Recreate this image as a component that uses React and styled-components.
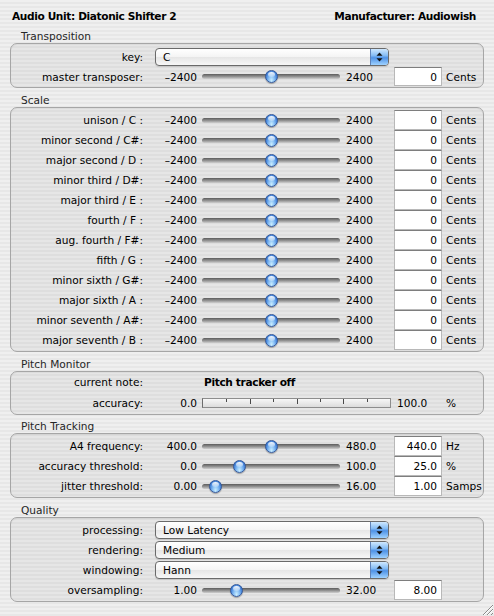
import React from "react";
import styled, { createGlobalStyle } from "styled-components";

const COLS = "132px 12px 42px 5px 138px 6px 43px 5px 48px 4px 1fr";

const Global = createGlobalStyle`
  html, body { margin: 0; padding: 0; background: #ececec; }
`;

const Window = styled.div`
  width: 494px;
  height: 616px;
  position: relative;
  overflow: hidden;
  box-sizing: border-box;
  background: repeating-linear-gradient(
    180deg,
    #efefef 0px,
    #efefef 2px,
    #e7e7e7 2px,
    #e7e7e7 4px
  );
  font-family: "Lucida Grande", "DejaVu Sans", sans-serif;
  font-size: 10.6px;
  color: #000;
`;

const Header = styled.div`
  height: 29px;
  box-sizing: border-box;
  padding: 3px 18px 0 12px;
  display: flex;
  align-items: center;
  justify-content: space-between;
  font-weight: bold;
  letter-spacing: -0.38px;
`;

const SectionTitle = styled.div`
  height: 14px;
  line-height: 14px;
  margin: ${(p) => p.$mt || 0}px 0 0 21px;
  color: #262626;
`;

const Panel = styled.div`
  margin: 0 10px;
  border: 1px solid #a6a6a6;
  border-radius: 7px;
  background: rgba(0, 0, 0, 0.035);
  box-shadow: inset 0 1px 1px rgba(0, 0, 0, 0.05);
  padding: ${(p) => p.$pt || 0}px 0 ${(p) => p.$pb || 0}px;
  display: flex;
  flex-direction: column;
`;

const Row = styled.div`
  display: grid;
  grid-template-columns: ${COLS};
  height: ${(p) => p.$h || 20}px;
  align-items: center;
  white-space: nowrap;
`;

const Label = styled.span`
  grid-column: 1 / 2;
  text-align: right;
`;

const MinVal = styled.span`
  grid-column: 2 / 4;
  text-align: right;
`;

const MaxVal = styled.span`
  grid-column: 7 / 9;
`;

const Unit = styled.span`
  grid-column: 11 / 12;
`;

const Field = styled.div`
  grid-column: 9 / 10;
  align-self: stretch;
  box-sizing: border-box;
  background: #fff;
  border: 1px solid #b8b8b8;
  border-top-color: #7e7e7e;
  text-align: right;
  padding-right: 4px;
  display: flex;
  align-items: center;
  justify-content: flex-end;
`;

const Track = styled.div`
  grid-column: 5 / 6;
  position: relative;
  height: 5px;
  border-radius: 3px;
  background: linear-gradient(#5c5c5c, #8a8a8a 45%, #cfcfcf);
`;

const Thumb = styled.span`
  position: absolute;
  top: 50%;
  width: 13px;
  height: 13px;
  margin: -6.5px 0 0 -6.5px;
  border-radius: 50%;
  box-sizing: border-box;
  border: 1px solid #34589a;
  background: radial-gradient(
    ellipse at 50% 85%,
    #c9eeff 0%,
    #86bdf4 38%,
    #4585db 72%,
    #2e63b9 100%
  );
  box-shadow: 0 1px 1px rgba(0, 0, 0, 0.3);

  &::after {
    content: "";
    position: absolute;
    left: 2px;
    right: 2px;
    top: 1px;
    height: 5px;
    border-radius: 50%;
    background: linear-gradient(rgba(255, 255, 255, 0.95), rgba(255, 255, 255, 0.25));
  }
`;

const PopupBox = styled.div`
  grid-column: 3 / 8;
  height: 18px;
  box-sizing: border-box;
  display: flex;
  border: 1px solid #6a6a6a;
  border-radius: 4px;
  overflow: hidden;
  background: linear-gradient(#ffffff, #f4f4f4 50%, #e6e6e6 52%, #f7f7f7);
  box-shadow: 0 1px 1px rgba(0, 0, 0, 0.12);
`;

const PopupText = styled.span`
  flex: 1;
  padding-left: 7px;
  display: flex;
  align-items: center;
`;

const PopupArrows = styled.span`
  width: 17px;
  border-left: 1px solid #5f82b8;
  background: linear-gradient(#cfe8ff, #86bdf5 40%, #4f92e6 55%, #9fd2ff);
  display: flex;
  align-items: center;
  justify-content: center;
`;

const Status = styled.span`
  grid-column: 5 / 9;
  padding-left: 2px;
  font-weight: bold;
  letter-spacing: -0.35px;
`;

const Meter = styled.div`
  grid-column: 5 / 9;
  margin-right: 3px;
  height: 10px;
  box-sizing: border-box;
  position: relative;
  border: 1px solid #8d8d8d;
  border-left-color: #6d6d6d;
  background: linear-gradient(#f7f7f7, #dcdcdc);
`;

const Tick = styled.span`
  position: absolute;
  top: 0;
  width: 1px;
  height: ${(p) => (p.$long ? 5 : 3)}px;
  background: #4a4a4a;
`;

const MeterMax = styled.span`
  grid-column: 9 / 10;
  padding-left: 3px;
`;

const Grip = styled.svg`
  position: absolute;
  right: 0;
  bottom: 0;
`;

function Slider({ min, max, value }) {
  const frac = (value - min) / (max - min);
  return (
    <Track>
      <Thumb style={{ left: `${6 + frac * 126}px` }} />
    </Track>
  );
}

function Arrows() {
  return (
    <svg width="7" height="10" viewBox="0 0 7 10">
      <path d="M3.5 0.5 L6.5 3.8 L0.5 3.8 Z" fill="#111" />
      <path d="M3.5 9.5 L6.5 6.2 L0.5 6.2 Z" fill="#111" />
    </svg>
  );
}

function Popup({ label, value }) {
  return (
    <Row>
      <Label>{label}</Label>
      <PopupBox>
        <PopupText>{value}</PopupText>
        <PopupArrows>
          <Arrows />
        </PopupArrows>
      </PopupBox>
    </Row>
  );
}

function SliderRow({ label, min, max, minText, maxText, value, valueText, unit, h }) {
  return (
    <Row $h={h}>
      <Label>{label}</Label>
      <MinVal>{minText}</MinVal>
      <Slider min={min} max={max} value={value} />
      <MaxVal>{maxText}</MaxVal>
      <Field>{valueText}</Field>
      {unit ? <Unit>{unit}</Unit> : null}
    </Row>
  );
}

const scale = [
  ["unison", "C"],
  ["minor second", "C#"],
  ["major second", "D"],
  ["minor third", "D#"],
  ["major third", "E"],
  ["fourth", "F"],
  ["aug. fourth", "F#"],
  ["fifth", "G"],
  ["minor sixth", "G#"],
  ["major sixth", "A"],
  ["minor seventh", "A#"],
  ["major seventh", "B"],
];

const ticks = [1, 2, 3, 4, 5, 6, 7];

export default function App() {
  return (
    <Window>
      <Global />
      <Header>
        <span>Audio Unit: Diatonic Shifter 2</span>
        <span>Manufacturer: Audiowish</span>
      </Header>

      <SectionTitle>Transposition</SectionTitle>
      <Panel $pt={3} $pb={1}>
        <Popup label="key:" value="C" />
        <SliderRow
          h={19}
          label="master transposer:"
          min={-2400}
          max={2400}
          minText="–2400"
          maxText="2400"
          value={0}
          valueText="0"
          unit="Cents"
        />
      </Panel>

      <SectionTitle $mt={5}>Scale</SectionTitle>
      <Panel $pt={2} $pb={1}>
        {scale.map(([name, note]) => (
          <SliderRow
            key={name}
            label={`${name} / ${note}${note.length === 1 ? "\u00a0" : ""}:`}
            min={-2400}
            max={2400}
            minText="–2400"
            maxText="2400"
            value={0}
            valueText="0"
            unit="Cents"
          />
        ))}
      </Panel>

      <SectionTitle $mt={5}>Pitch Monitor</SectionTitle>
      <Panel>
        <Row $h={20}>
          <Label>current note:</Label>
          <Status>Pitch tracker off</Status>
        </Row>
        <Row $h={22}>
          <Label>accuracy:</Label>
          <MinVal>0.0</MinVal>
          <Meter>
            {ticks.map((t) => (
              <Tick key={t} $long={t % 2 === 0} style={{ left: `${(t / 8) * 100}%` }} />
            ))}
          </Meter>
          <MeterMax>100.0</MeterMax>
          <Unit>%</Unit>
        </Row>
      </Panel>

      <SectionTitle $mt={4}>Pitch Tracking</SectionTitle>
      <Panel $pt={2} $pb={1}>
        <SliderRow
          label="A4 frequency:"
          min={400}
          max={480}
          minText="400.0"
          maxText="480.0"
          value={440}
          valueText="440.0"
          unit="Hz"
        />
        <SliderRow
          label="accuracy threshold:"
          min={0}
          max={100}
          minText="0.0"
          maxText="100.0"
          value={25}
          valueText="25.0"
          unit="%"
        />
        <SliderRow
          label="jitter threshold:"
          min={0}
          max={16}
          minText="0.00"
          maxText="16.00"
          value={1}
          valueText="1.00"
          unit="Samps"
        />
      </Panel>

      <SectionTitle $mt={5}>Quality</SectionTitle>
      <Panel $pt={2} $pb={1}>
        <Popup label="processing:" value="Low Latency" />
        <Popup label="rendering:" value="Medium" />
        <Popup label="windowing:" value="Hann" />
        <SliderRow
          label="oversampling:"
          min={1}
          max={32}
          minText="1.00"
          maxText="32.00"
          value={8}
          valueText="8.00"
        />
      </Panel>

      <Grip width="14" height="14" viewBox="0 0 14 14">
        <path d="M13 3 L3 13" stroke="#8a8a8a" strokeWidth="1" />
        <path d="M13 4 L4 13" stroke="#ffffff" strokeWidth="1" />
        <path d="M13 7 L7 13" stroke="#8a8a8a" strokeWidth="1" />
        <path d="M13 8 L8 13" stroke="#ffffff" strokeWidth="1" />
        <path d="M13 11 L11 13" stroke="#8a8a8a" strokeWidth="1" />
      </Grip>
    </Window>
  );
}
